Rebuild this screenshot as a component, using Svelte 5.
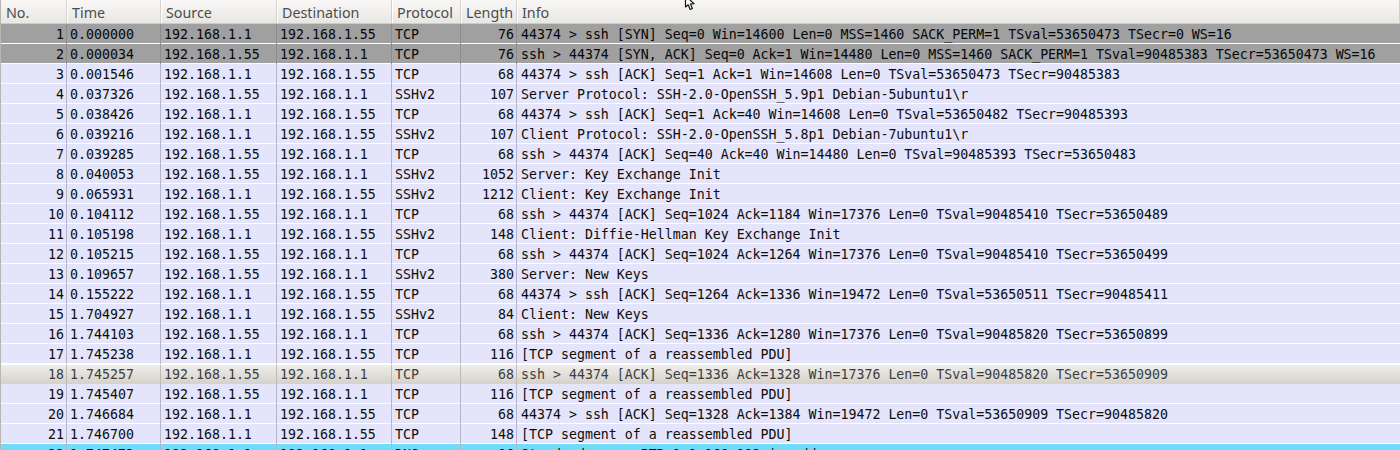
<script>
  // Wireshark-Paketliste: Kopfzeile plus Zeilen, Spaltenbreiten stehen im CSS-Grid.
  const columns = [
    { label: "No." },
    { label: "Time" },
    { label: "Source" },
    { label: "Destination" },
    { label: "Protocol" },
    { label: "Length" },
    { label: "Info" },
  ];

  const A = "192.168.1.1";
  const B = "192.168.1.55";

  const packets = [
    [1, "0.000000", A, B, "TCP", 76, "44374 > ssh [SYN] Seq=0 Win=14600 Len=0 MSS=1460 SACK_PERM=1 TSval=53650473 TSecr=0 WS=16", "dark"],
    [2, "0.000034", B, A, "TCP", 76, "ssh > 44374 [SYN, ACK] Seq=0 Ack=1 Win=14480 Len=0 MSS=1460 SACK_PERM=1 TSval=90485383 TSecr=53650473 WS=16", "dark"],
    [3, "0.001546", A, B, "TCP", 68, "44374 > ssh [ACK] Seq=1 Ack=1 Win=14608 Len=0 TSval=53650473 TSecr=90485383"],
    [4, "0.037326", B, A, "SSHv2", 107, "Server Protocol: SSH-2.0-OpenSSH_5.9p1 Debian-5ubuntu1\\r"],
    [5, "0.038426", A, B, "TCP", 68, "44374 > ssh [ACK] Seq=1 Ack=40 Win=14608 Len=0 TSval=53650482 TSecr=90485393"],
    [6, "0.039216", A, B, "SSHv2", 107, "Client Protocol: SSH-2.0-OpenSSH_5.8p1 Debian-7ubuntu1\\r"],
    [7, "0.039285", B, A, "TCP", 68, "ssh > 44374 [ACK] Seq=40 Ack=40 Win=14480 Len=0 TSval=90485393 TSecr=53650483"],
    [8, "0.040053", B, A, "SSHv2", 1052, "Server: Key Exchange Init"],
    [9, "0.065931", A, B, "SSHv2", 1212, "Client: Key Exchange Init"],
    [10, "0.104112", B, A, "TCP", 68, "ssh > 44374 [ACK] Seq=1024 Ack=1184 Win=17376 Len=0 TSval=90485410 TSecr=53650489"],
    [11, "0.105198", A, B, "SSHv2", 148, "Client: Diffie-Hellman Key Exchange Init"],
    [12, "0.105215", B, A, "TCP", 68, "ssh > 44374 [ACK] Seq=1024 Ack=1264 Win=17376 Len=0 TSval=90485410 TSecr=53650499"],
    [13, "0.109657", B, A, "SSHv2", 380, "Server: New Keys"],
    [14, "0.155222", A, B, "TCP", 68, "44374 > ssh [ACK] Seq=1264 Ack=1336 Win=19472 Len=0 TSval=53650511 TSecr=90485411"],
    [15, "1.704927", A, B, "SSHv2", 84, "Client: New Keys"],
    [16, "1.744103", B, A, "TCP", 68, "ssh > 44374 [ACK] Seq=1336 Ack=1280 Win=17376 Len=0 TSval=90485820 TSecr=53650899"],
    [17, "1.745238", A, B, "TCP", 116, "[TCP segment of a reassembled PDU]"],
    [18, "1.745257", B, A, "TCP", 68, "ssh > 44374 [ACK] Seq=1336 Ack=1328 Win=17376 Len=0 TSval=90485820 TSecr=53650909", "focus"],
    [19, "1.745407", B, A, "TCP", 116, "[TCP segment of a reassembled PDU]"],
    [20, "1.746684", A, B, "TCP", 68, "44374 > ssh [ACK] Seq=1328 Ack=1384 Win=19472 Len=0 TSval=53650909 TSecr=90485820"],
    [21, "1.746700", A, B, "TCP", 148, "[TCP segment of a reassembled PDU]"],
    [22, "1.747473", A, A, "DNS", 86, "Standard query PTR 1.1.168.192.in-addr.arpa", "dns"],
  ];
</script>

<div class="list">
  <div class="head">
    {#each columns as col}
      <div class="th">{col.label}</div>
    {/each}
    <svg class="cursor" width="14" height="12" viewBox="0 0 14 12" aria-hidden="true">
      <path d="M1.5 -4 L1.5 7 L4.2 4.8 L6.2 9.5 L8.4 8.5 L6.4 4 L10 3.6 Z" fill="#fff" stroke="#111" stroke-width="1.2" stroke-linejoin="round" />
    </svg>
  </div>
  {#each packets as p}
    <div class="row {p[7] ?? ''}">
      <div class="td num">{p[0]}</div>
      <div class="td">{p[1]}</div>
      <div class="td">{p[2]}</div>
      <div class="td">{p[3]}</div>
      <div class="td">{p[4]}</div>
      <div class="td num">{p[5]}</div>
      <div class="td info">{p[6]}</div>
    </div>
  {/each}
</div>

<style>
  :global(body) {
    margin: 0;
    overflow: hidden;
    background: #fff;
  }
  .list {
    --cols: 67px 94px 116px 115px 69px 56px 1fr;
    width: 1400px;
    height: 450px;
    overflow: hidden;
    border-left: 1px solid #b9b6b0;
    box-sizing: border-box;
  }
  .head {
    position: relative;
    display: grid;
    grid-template-columns: var(--cols);
    margin-left: -1px;
    height: 24px;
    box-sizing: border-box;
    background: linear-gradient(#f8f7f6, #e9e7e3);
    border-bottom: 1px solid #cfccc6;
  }
  .th {
    padding: 1px 0 0 4px;
    font: 14.3px/23px "Noto Sans", "Open Sans", sans-serif;
    color: #4c4c4c;
    border-right: 1px solid #d3d0ca;
    border-left: 1px solid #fff;
    box-sizing: border-box;
    white-space: nowrap;
    overflow: hidden;
  }
  .th:first-child {
    padding-left: 5px;
  }
  .cursor {
    position: absolute;
    left: 684px;
    top: 0;
  }
  .row {
    display: grid;
    grid-template-columns: var(--cols);
    margin-left: -1px;
    height: 20px;
    box-sizing: border-box;
    background: #e4e4fb;
    border-bottom: 1px solid #fff;
    color: #0c0c08;
    font: 13.28px/19px "DejaVu Sans Mono", monospace;
  }
  .row.dark {
    background: #a0a0a0;
    color: #060606;
  }
  .row.focus {
    background: linear-gradient(#efeeea, #d6d3cb);
    color: #3c3c3c;
    border-top: 1px solid #fff;
    border-bottom-color: #d6d3cb;
  }
  .row.focus .td {
    line-height: 18px;
  }
  .row.dns {
    background: #70dcfb;
    border-bottom: 0;
  }
  .td {
    padding: 1px 0 0 3px;
    border-right: 1px solid #b7b5c8;
    box-sizing: border-box;
    white-space: nowrap;
    overflow: hidden;
  }
  .row.dark .td {
    border-right-color: #8c8c8c;
  }
  .row.focus .td {
    border-right-color: #bdbab2;
  }
  .num {
    padding: 1px 2px 0 0 !important;
    text-align: right;
  }
  .info {
    padding-left: 4px;
    border-right: 0;
    overflow: visible;
  }
</style>
